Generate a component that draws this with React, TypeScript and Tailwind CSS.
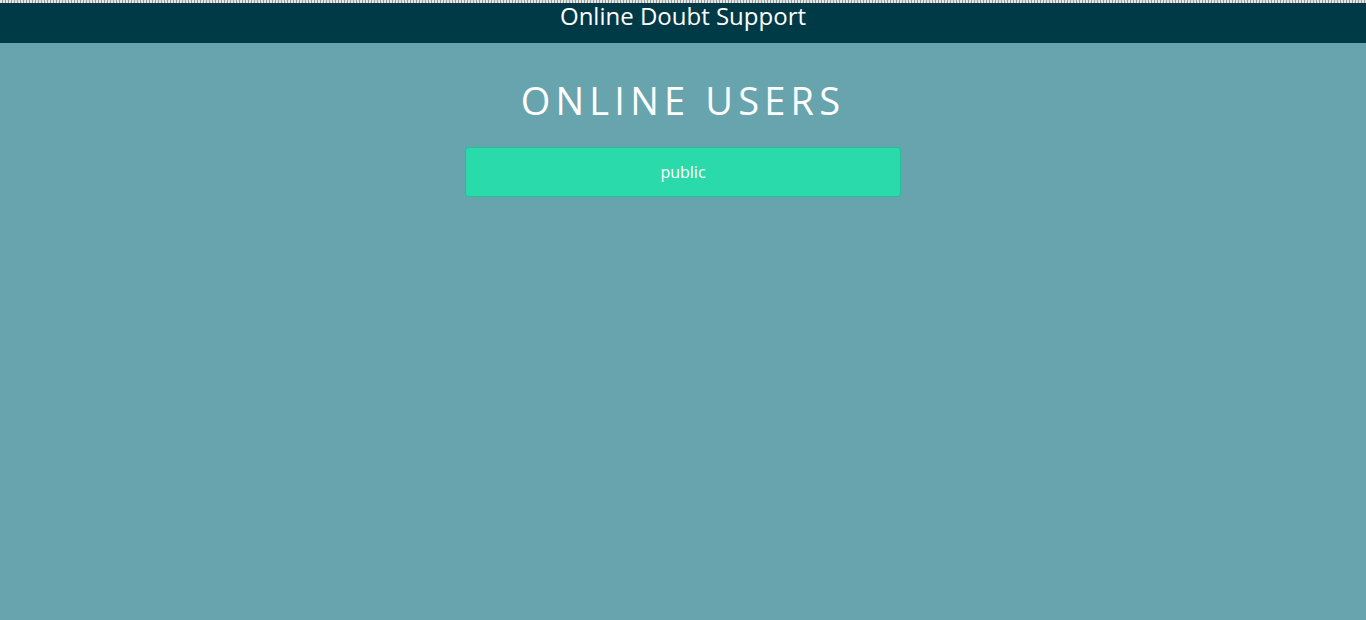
export default function App() {
  return (
    <div className="min-h-[620px] bg-[#67a4ae] font-['Open_Sans',sans-serif] text-white">
      <div className="h-[3px] bg-[repeating-linear-gradient(90deg,#e5e5e5_0px,#e5e5e5_2px,#9a9a9a_2px,#9a9a9a_3px)]" />
      <header className="flex h-[40px] items-start justify-center bg-[#013a47]">
        <h1 className="mt-[-2px] text-[24px] leading-[30px]">Online Doubt Support</h1>
      </header>
      <main className="flex flex-col items-center">
        <h2 className="mt-[34px] text-[38px] leading-[46px] tracking-[5.2px]">ONLINE USERS</h2>
        <div className="mt-[24px] flex h-[50px] w-[436px] items-center justify-center rounded-[3px] border border-[#22bf98] bg-[#2bdaab] text-[16px]">
          public
        </div>
      </main>
    </div>
  );
}
